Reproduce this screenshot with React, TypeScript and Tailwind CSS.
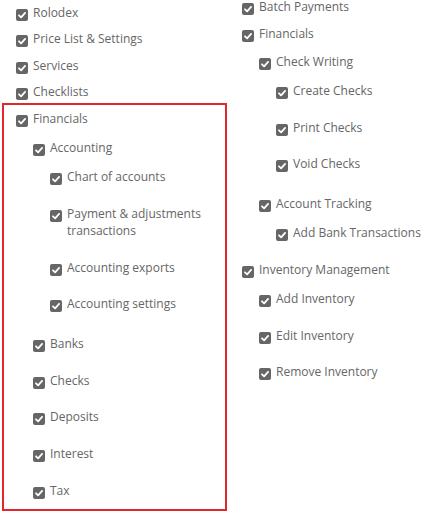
import React from "react";

type Node = { label: string; mt: string; children?: Node[] };

function Box() {
  return (
    <span className="mt-[5px] flex h-[12px] w-[12px] shrink-0 items-center justify-center rounded-[2px] bg-[#666666]">
      <svg viewBox="0 0 12 12" className="h-[12px] w-[12px]">
        <path d="M3 6.3 L5.1 8.3 L9.1 3.9" fill="none" stroke="#ffffff" strokeWidth="1.8" strokeLinecap="round" strokeLinejoin="round" />
      </svg>
    </span>
  );
}

function Item({ node }: { node: Node }) {
  return (
    <div className={node.mt}>
      <div className="flex items-start gap-[5px]">
        <Box />
        <span className="leading-[17px]">{node.label}</span>
      </div>
      {node.children && (
        <div className="pl-[17px]">
          {node.children.map((c) => (
            <Item key={c.label} node={c} />
          ))}
        </div>
      )}
    </div>
  );
}

const leftTop: Node[] = [
  { label: "Rolodex", mt: "mt-0" },
  { label: "Price List & Settings", mt: "mt-[9px]" },
  { label: "Services", mt: "mt-[10px]" },
  { label: "Checklists", mt: "mt-[9px]" },
];

const leftBox: Node = {
  label: "Financials",
  mt: "mt-0",
  children: [
    {
      label: "Accounting",
      mt: "mt-[12px]",
      children: [
        { label: "Chart of accounts", mt: "mt-[12px]" },
        { label: "Payment & adjustments transactions", mt: "mt-[20px]" },
        { label: "Accounting exports", mt: "mt-[20px]" },
        { label: "Accounting settings", mt: "mt-[19px]" },
      ],
    },
    { label: "Banks", mt: "mt-[23px]" },
    { label: "Checks", mt: "mt-[20px]" },
    { label: "Deposits", mt: "mt-[19px]" },
    { label: "Interest", mt: "mt-[20px]" },
    { label: "Tax", mt: "mt-[20px]" },
  ],
};

const right: Node[] = [
  { label: "Batch Payments", mt: "mt-0" },
  {
    label: "Financials",
    mt: "mt-[10px]",
    children: [
      {
        label: "Check Writing",
        mt: "mt-[11px]",
        children: [
          { label: "Create Checks", mt: "mt-[12px]" },
          { label: "Print Checks", mt: "mt-[20px]" },
          { label: "Void Checks", mt: "mt-[19px]" },
        ],
      },
      {
        label: "Account Tracking",
        mt: "mt-[23px]",
        children: [{ label: "Add Bank Transactions", mt: "mt-[12px]" }],
      },
    ],
  },
  {
    label: "Inventory Management",
    mt: "mt-[20px]",
    children: [
      { label: "Add Inventory", mt: "mt-[12px]" },
      { label: "Edit Inventory", mt: "mt-[20px]" },
      { label: "Remove Inventory", mt: "mt-[19px]" },
    ],
  },
];

export default function App() {
  return (
    <div className="h-[513px] w-[439px] overflow-hidden bg-white font-['Open_Sans',sans-serif] text-[12px] text-[#666666]">
      <div className="flex">
        <div className="w-[228px] shrink-0 pt-[3.5px]">
          <div className="pl-[16px]">
            {leftTop.map((n) => (
              <Item key={n.label} node={n} />
            ))}
          </div>
          <div className="ml-[2px] mt-[3.5px] w-[225px] border-2 border-[#e3262b] pb-[10.5px] pl-[12px] pr-[4px] pt-[4.5px]">
            <Item node={leftBox} />
          </div>
        </div>
        <div className="ml-[14px] mt-[-2.5px]">
          {right.map((n) => (
            <Item key={n.label} node={n} />
          ))}
        </div>
      </div>
    </div>
  );
}
